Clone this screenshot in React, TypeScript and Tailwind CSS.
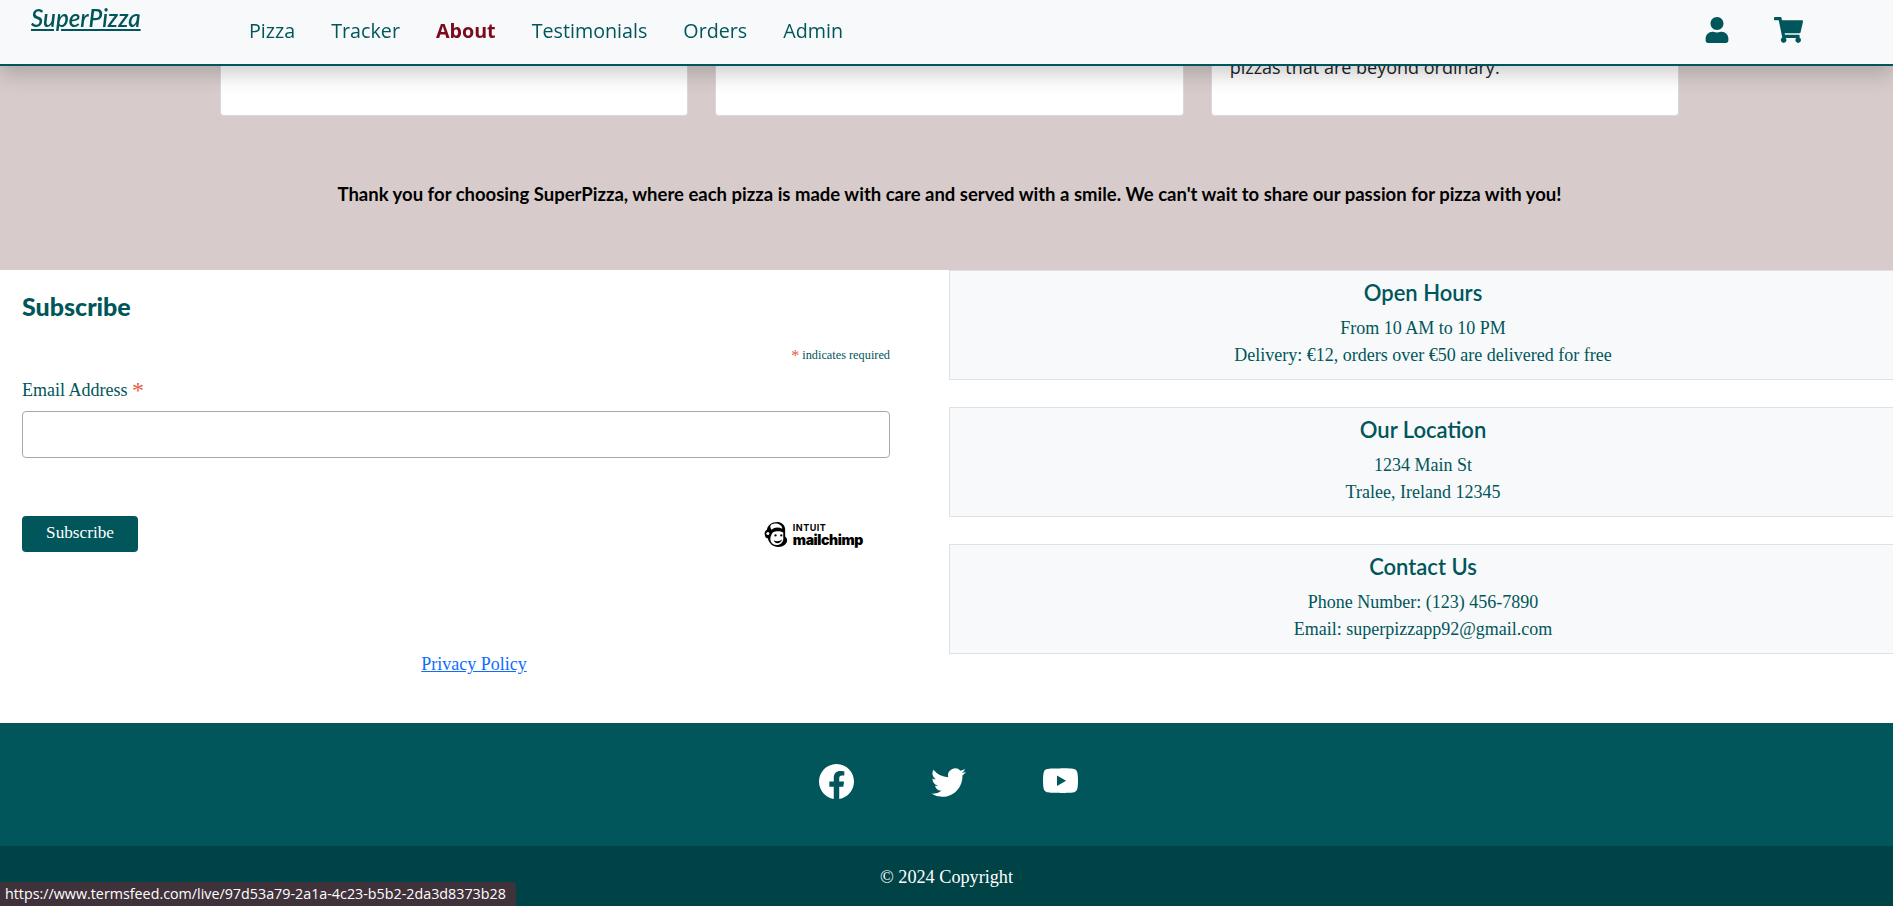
import React from 'react';
import { FaUser, FaShoppingCart } from 'react-icons/fa';
import { BsFacebook, BsTwitter, BsYoutube } from 'react-icons/bs';

const navLinks = ['Pizza', 'Tracker', 'About', 'Testimonials', 'Orders', 'Admin'];

const infoBoxes = [
    { title: 'Open Hours', lines: ['From 10 AM to 10 PM', 'Delivery: €12, orders over €50 are delivered for free'] },
    { title: 'Our Location', lines: ['1234 Main St', 'Tralee, Ireland 12345'] },
    { title: 'Contact Us', lines: ['Phone Number: (123) 456-7890', 'Email: superpizzapp92@gmail.com'] },
];

function MailchimpHead() {
    return (
        <svg viewBox="0 0 26 28" className="w-[25px] h-[27px]">
            <path d="M14 1C8 1 4 4 3 9c-2 1-3 3-2 6 0 2 2 3 3 3 1 5 5 9 11 9 5 0 9-3 9-7 0-2-1-3-2-4V9c0-4-3-8-8-8z" fill="#000" />
            <path d="M7 4c2-1 5-2 8-1 3 1 4 3 4 5-4-2-8-2-11 1-1-1-2-3-1-5z" fill="#fff" />
            <path d="M9 12c3-2 8-2 11 0v7c0 3-3 6-7 6-3 0-5-2-6-4-1-3 0-6 2-9z" fill="#fff" />
            <path d="M10 20c3 2 7 1 9-1-1 3-3 4-5 4s-3-1-4-3z" fill="#000" />
            <circle cx="12" cy="15" r="1.2" fill="#000" />
            <circle cx="18" cy="15" r="1.2" fill="#000" />
            <circle cx="4" cy="13" r="1.6" fill="#fff" />
        </svg>
    );
}

export default function App() {
    return (
        <div className="relative h-[906px] overflow-hidden bg-white font-['Liberation_Serif',serif] text-[#00565a]">
            {/* Navbar */}
            <nav className="fixed top-0 left-0 right-0 z-10 h-[66px] flex bg-[#f8f9fa] border-b-2 border-[#00565a] shadow-[0_8px_20px_rgba(0,0,0,0.2)]">
                <a className="ml-[31px] mt-[3px] w-[218px] h-[30px] text-[24px] leading-[30px] font-['Lato',sans-serif] italic font-semibold underline">
                    SuperPizza
                </a>
                <div className="flex gap-[36px] mt-[17px] h-[28px] font-['Open_Sans',sans-serif] text-[19.7px] leading-[28px]">
                    {navLinks.map((link) => (
                        <a key={link} className={link === 'About' ? 'font-bold text-[#7b0a1e]' : ''}>
                            {link}
                        </a>
                    ))}
                </div>
                <div className="ml-auto mr-[90px] mt-[17px] flex gap-[45px]">
                    <FaUser className="w-[24px] h-[26px]" />
                    <FaShoppingCart className="w-[29px] h-[26px]" />
                </div>
            </nav>

            {/* About */}
            <section className="h-[270px] bg-[#d7cccb] flex flex-col items-center pl-[6px]">
                <div className="w-[1459px] h-[116px] grid grid-cols-3 gap-[27px]">
                    <div className="bg-white rounded-b border border-t-0 border-[#d9d9d9]" />
                    <div className="bg-white rounded-b border border-t-0 border-[#d9d9d9]" />
                    <div className="bg-white rounded-b border border-t-0 border-[#d9d9d9] pl-[18px] pt-[54px] font-['Open_Sans',sans-serif] text-[18px] leading-[26px] text-[#212529]">
                        pizzas that are beyond ordinary.
                    </div>
                </div>
                <p className="mt-[65px] text-[18.5px] leading-[27px] font-['Lato',sans-serif] font-bold text-black">
                    Thank you for choosing SuperPizza, where each pizza is made with care and served with a smile. We can't wait to share our passion for pizza with you!
                </p>
            </section>

            {/* Subscribe and info */}
            <section className="h-[453px] grid grid-cols-[949px_948px]">
                <div className="pl-[22px] pr-[59px] flex flex-col">
                    <h2 className="mt-[20px] text-[25px] leading-[32px] font-['Lato',sans-serif] font-black">Subscribe</h2>
                    <p className="mt-[25px] h-[16px] text-right text-[12.3px] leading-[16px]">
                        <span className="text-[#e85c41] text-[16px] leading-[16px] align-[-2px]">*</span> indicates required
                    </p>
                    <label className="mt-[16px] h-[23px] text-[18px] leading-[23px]">
                        Email Address <span className="text-[#e85c41] text-[24px] leading-[20px] align-[-2px]">*</span>
                    </label>
                    <input className="mt-[9px] h-[47px] border border-[#a9a9a9] rounded-[4px] bg-white" />
                    <div className="mt-[58px] h-[36px] flex justify-between">
                        <button className="w-[116px] h-[36px] pb-[2px] rounded-[4px] bg-[#00565a] text-white text-[17.2px]">Subscribe</button>
                        <div className="flex items-center gap-[4px] mr-[26px] h-[36px] -translate-x-[1px] text-black">
                            <MailchimpHead />
                            <div className="flex flex-col font-['Inter',sans-serif]">
                                <span className="text-[9px] leading-[10px] font-bold tracking-[0.5px]">INTUIT</span>
                                <span className="text-[14px] leading-[13px] font-black tracking-[-0.4px]">mailchimp</span>
                            </div>
                        </div>
                    </div>
                    <a className="mt-[99px] ml-[36px] self-center text-[18px] leading-[27px] text-[#0d6efd] underline">Privacy Policy</a>
                </div>
                <div className="flex flex-col gap-[27px]">
                    {infoBoxes.map((box) => (
                        <div key={box.title} className="h-[110px] bg-[#f8f9fa] border border-[#dee2e6] text-center">
                            <h3 className="mt-[6px] h-[32px] text-[22px] leading-[32px] font-['Lato',sans-serif] font-semibold">{box.title}</h3>
                            <p className="mt-[6px] text-[18px] leading-[27px]">{box.lines[0]}</p>
                            <p className="text-[18px] leading-[27px]">{box.lines[1]}</p>
                        </div>
                    ))}
                </div>
            </section>

            {/* Footer */}
            <footer className="text-white">
                <div className="h-[123px] bg-[#00565a] flex justify-center gap-[77px] pt-[41px] pl-[3px]">
                    <BsFacebook className="w-[35px] h-[35px]" />
                    <BsTwitter className="w-[35px] h-[35px]" />
                    <BsYoutube className="w-[35px] h-[35px]" />
                </div>
                <div className="h-[60px] pt-[4px] bg-[#004347] flex justify-center items-center text-[18.2px]">© 2024 Copyright</div>
            </footer>

            {/* Link preview */}
            <div className="fixed bottom-0 left-0 z-20 w-[516px] h-[24px] pl-[5px] rounded-tr bg-[#3f323a] text-white font-['Open_Sans',sans-serif] text-[14.3px] leading-[24px] whitespace-nowrap">
                https://www.termsfeed.com/live/97d53a79-2a1a-4c23-b5b2-2da3d8373b28
            </div>
        </div>
    );
}
